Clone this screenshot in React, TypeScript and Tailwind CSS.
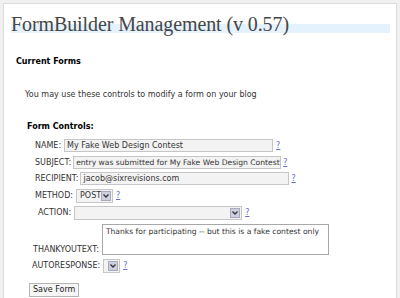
import React from "react";

const sans = { fontFamily: '"DejaVu Sans", Verdana, sans-serif' };

function Help() {
  return <span className="text-[8px] leading-none text-[#6a6ad4] underline">?</span>;
}

function Arrow() {
  return (
    <span className="flex h-[10px] w-[10px] items-center justify-center border border-[#a9a9bd] bg-[#cfd0de]">
      <svg width="6" height="4" viewBox="0 0 6 4">
        <path d="M0.5 0.5 L3 3 L5.5 0.5" fill="none" stroke="#333" strokeWidth="1.3" />
      </svg>
    </span>
  );
}

function Field({ value, width, size }: { value: string; width: string; size?: string }) {
  return (
    <div
      className={`flex h-[13px] shrink-0 items-center overflow-hidden whitespace-nowrap border border-[#c6c6c6] bg-[#f3f3f3] px-[2px] text-[#333] ${size ?? "text-[8px]"} ${width}`}
    >
      {value}
    </div>
  );
}

function Select({ value, width }: { value?: string; width: string }) {
  return (
    <div className={`flex h-[14px] items-center justify-between border border-[#c6c6c6] bg-[#f3f3f3] pl-[3px] pr-[1px] text-[8px] text-[#333] ${width}`}>
      <span>{value}</span>
      <Arrow />
    </div>
  );
}

export default function App() {
  return (
    <div className="min-h-[298px] bg-[#f0f0f0] pl-[3px] pr-[3px] pt-[3px]" style={sans}>
      <div className="border border-b-0 border-[#dcdcdc] bg-white pb-6">
        <h2
          className="ml-[7px] mr-[6px] mt-[11px] h-[18px] bg-[linear-gradient(to_bottom,transparent_9px,#e4f2fd_9px)] text-[20px] leading-[18px] tracking-[-0.1px] text-[#464646] whitespace-nowrap"
          style={{ fontFamily: '"Liberation Serif", Georgia, serif' }}
        >
          FormBuilder Management (v 0.57)
        </h2>

        <h3 className="ml-[12px] mt-[24px] text-[8px] font-bold leading-[10px] text-black">Current Forms</h3>

        <p className="ml-[21px] mt-[23px] text-[8px] leading-[10px] text-[#333]">
          You may use these controls to modify a form on your blog
        </p>

        <h4 className="ml-[23px] mt-[22px] text-[8px] font-bold leading-[10px] text-black">Form Controls:</h4>

        <div className="ml-[31px] text-[8px] text-[#333]">
          <div className="mt-[7px] flex items-center gap-[3px]">
            <span>NAME:</span>
            <Field value="My Fake Web Design Contest" width="w-[209px]" />
            <Help />
          </div>
          <div className="mt-[4px] flex items-center gap-[2px]">
            <span>SUBJECT:</span>
            <Field value="entry was submitted for My Fake Web Design Contest" width="w-[208px]" size="text-[7.6px]" />
            <Help />
          </div>
          <div className="mt-[3px] flex items-center gap-[2px]">
            <span>RECIPIENT:</span>
            <Field value="jacob@sixrevisions.com" width="w-[209px]" />
            <Help />
          </div>
          <div className="mt-[4px] flex items-center gap-[3px]">
            <span>METHOD:</span>
            <Select value="POST" width="w-[37px]" />
            <Help />
          </div>
          <div className="mt-[3px] flex items-center gap-[3px]">
            <span className="ml-[3px]">ACTION:</span>
            <Select width="w-[168px]" />
            <Help />
          </div>
          <div className="mt-[4px] flex items-end gap-[3px]">
            <span className="-ml-[2px] leading-[10px]">THANKYOUTEXT:</span>
            <div className="h-[31px] w-[227px] overflow-hidden whitespace-nowrap border border-[#a8a8a8] bg-white px-[3px] pt-[2px] text-[7.6px] leading-[10px]">
              Thanks for participating -- but this is a fake contest only
            </div>
          </div>
          <div className="mt-[4px] flex items-center gap-[3px]">
            <span className="-ml-[3px]">AUTORESPONSE:</span>
            <Select width="w-[17px]" />
            <Help />
          </div>
        </div>

        <button className="ml-[25px] mt-[10px] flex h-[14px] items-center border border-[#b5b5b5] bg-[#f6f6f6] px-[3px] text-[8px] text-[#222]">
          Save Form
        </button>
      </div>
    </div>
  );
}
